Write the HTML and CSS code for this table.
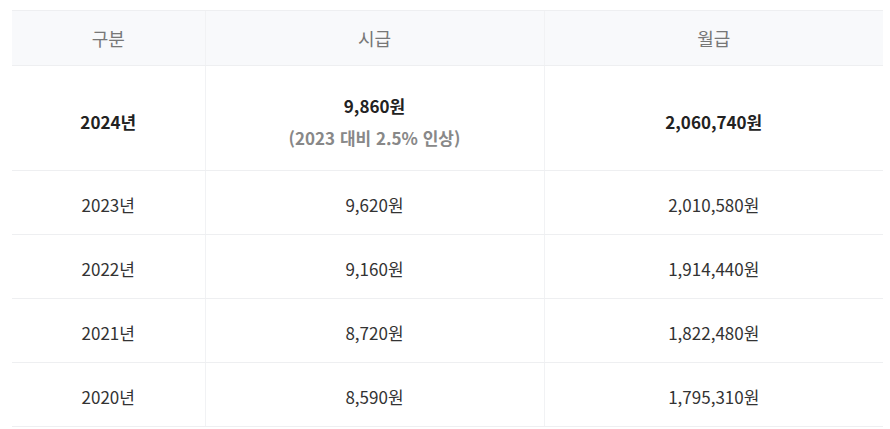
FILE: index.html
```html
<!DOCTYPE html>
<html lang="ko">
<head>
<meta charset="utf-8">
<link rel="stylesheet" href="styles.css">
</head>
<body>
<div class="wrap">
<table class="wage">
  <colgroup>
    <col class="c1"><col class="c2"><col class="c3">
  </colgroup>
  <thead>
    <tr><th>구분</th><th>시급</th><th>월급</th></tr>
  </thead>
  <tbody>
    <tr class="current">
      <td>2024년</td>
      <td><span class="main">9,860원</span><span class="sub">(2023 대비 2.5% 인상)</span></td>
      <td>2,060,740원</td>
    </tr>
    <tr><td>2023년</td><td>9,620원</td><td>2,010,580원</td></tr>
    <tr><td>2022년</td><td>9,160원</td><td>1,914,440원</td></tr>
    <tr><td>2021년</td><td>8,720원</td><td>1,822,480원</td></tr>
    <tr><td>2020년</td><td>8,590원</td><td>1,795,310원</td></tr>
  </tbody>
</table>
</div>
</body>
</html>
```

FILE: styles.css
```css
html, body {
  margin: 0;
  padding: 0;
  background: #fff;
}
.wrap {
  padding: 10px 7px 0 12px;
}
.wage {
  width: 871px;
  border-collapse: collapse;
  table-layout: fixed;
  font-family: "Noto Sans CJK KR", "Noto Sans", sans-serif;
  font-size: 17px;
  color: #333;
}
.c1 { width: 193px; }
.c2 { width: 339px; }
.c3 { width: 339px; }
.wage th, .wage td {
  text-align: center;
  vertical-align: middle;
  border-top: 1px solid #eeeff1;
  border-bottom: 1px solid #eeeff1;
  border-left: 1px solid #f1f2f4;
  padding: 3px 0 0;
  box-sizing: border-box;
}
.wage th:first-child, .wage td:first-child {
  border-left: none;
}
.wage th {
  height: 55px;
  padding-top: 0;
  background: #f8f9fb;
  color: #777;
  font-weight: normal;
  font-size: 18px;
}
.wage td {
  height: 64px;
}
.current td {
  height: 105px;
  padding-top: 7px;
  font-weight: bold;
  color: #222;
}
.current .main, .current .sub {
  display: block;
  line-height: 32px;
}
.current .sub {
  color: #888;
}
```
